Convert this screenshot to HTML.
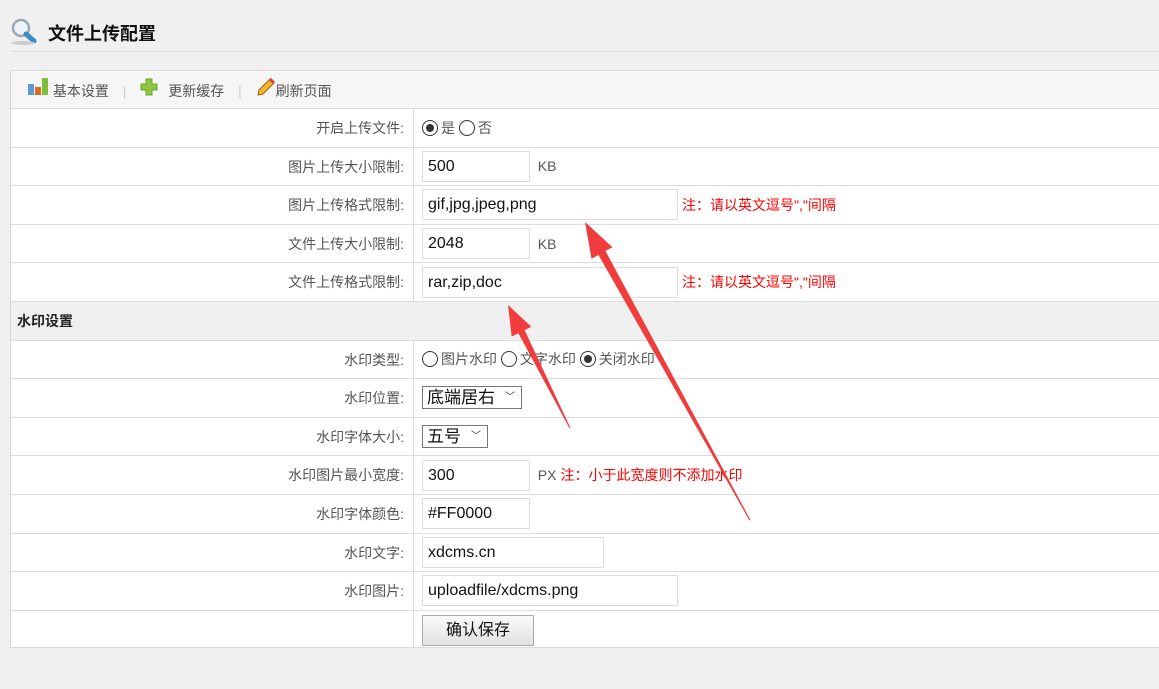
<!DOCTYPE html>
<html><head><meta charset="utf-8"><style>
*{margin:0;padding:0;box-sizing:border-box}
body{width:1159px;height:689px;background:#f0f0f0;font-family:"Liberation Sans","Noto Sans CJK SC",sans-serif;position:relative;overflow:hidden;color:#333}
.title{position:absolute;left:48px;top:20px;font-size:18px;font-weight:bold;color:#111}
.hline{position:absolute;left:10px;right:0;top:51px;border-top:1px solid #ddd}
.box{position:absolute;left:10px;top:70px;width:1160px;height:578px;background:#fff;border:1px solid #d8d8d8}
.tb{height:38px;background:#f6f6f6;border-bottom:1px solid #ddd;font-size:14px;color:#555;line-height:38px;padding-left:16px}
.tb span{display:inline-block;vertical-align:middle}
.row{height:38.6px;border-bottom:1px solid #ddd;display:flex;font-size:14px}
.lab{width:403px;border-right:1px solid #ddd;text-align:right;padding-right:9px;line-height:38px;color:#555}
.val{padding-left:8px;display:flex;align-items:center;color:#555}
.inp{height:31px;border:1px solid #ddd;font-size:16px;color:#111;padding-left:5px;line-height:29px;background:#fff}
.red{color:#f00;font-size:14px;margin-left:4px}
.sec{height:38.6px;border-bottom:1px solid #ddd;background:#f0f0f0;font-weight:bold;font-size:14px;line-height:38px;padding-left:6px;color:#222}
.rad{display:inline-block;width:16px;height:16px;border:1px solid #333;border-radius:50%;vertical-align:-3px;margin-right:3px;position:relative;background:#fff}
.rad.on::after{content:"";position:absolute;left:3px;top:3px;width:8px;height:8px;border-radius:50%;background:#333}
.sel{height:23px;border:1px solid #777;font-size:17px;color:#111;padding:0 4px;line-height:21px;display:flex;align-items:center}
.sel i{font-style:normal;font-size:10px;margin-left:10px;color:#333}
.btn{height:31px;width:112px;border:1px solid #aaa;background:linear-gradient(#fafafa,#e2e2e2);font-size:16px;color:#111;text-align:center;line-height:29px}
</style></head><body>
<svg style="position:absolute;left:10px;top:18px" width="30" height="28" viewBox="0 0 30 28"><circle cx="11" cy="10" r="8" fill="#eef3f8" stroke="#9aa6b2" stroke-width="2.5"/><path d="M16 16 L24 23" stroke="#3a8cc4" stroke-width="5" stroke-linecap="round"/><ellipse cx="13" cy="25" rx="12" ry="2" fill="#ccc"/></svg>
<div class="title">文件上传配置</div>
<div class="hline"></div>
<div class="box">
<div class="tb"><span><svg width="22" height="20" viewBox="0 0 22 20"><rect x="1" y="8" width="6" height="11" fill="#5b9bd5"/><rect x="8" y="11" width="6" height="8" fill="#e06a1b"/><rect x="15" y="2" width="6" height="17" fill="#7cbf3a"/></svg></span> <span>基本设置</span> <span style="color:#ccc;margin:0 10px">|</span> <span><svg width="18" height="18" viewBox="0 0 18 18"><path d="M6 1h6v5h5v6h-5v5H6v-5H1V6h5z" fill="#8cc63f" stroke="#6aa52a"/></svg></span> <span style="margin-left:6px">更新缓存</span> <span style="color:#ccc;margin:0 10px">|</span> <span><svg width="20" height="20" viewBox="0 0 20 20"><path d="M3 14 L14 3 L18 7 L7 18 L2 19 Z" fill="#f5b828" stroke="#a0601a"/><path d="M14 3 L18 7" stroke="#e04040" stroke-width="3"/></svg></span><span>刷新页面</span></div>
<div class="row"><div class="lab">开启上传文件:</div><div class="val"><span class="rad on"></span>是&nbsp;<span class="rad"></span>否</div></div>
<div class="row"><div class="lab">图片上传大小限制:</div><div class="val"><div class="inp" style="width:108px">500</div>&nbsp;&nbsp;KB</div></div>
<div class="row"><div class="lab">图片上传格式限制:</div><div class="val"><div class="inp" style="width:256px">gif,jpg,jpeg,png</div><span class="red">注：请以英文逗号","间隔</span></div></div>
<div class="row"><div class="lab">文件上传大小限制:</div><div class="val"><div class="inp" style="width:108px">2048</div>&nbsp;&nbsp;KB</div></div>
<div class="row"><div class="lab">文件上传格式限制:</div><div class="val"><div class="inp" style="width:256px">rar,zip,doc</div><span class="red">注：请以英文逗号","间隔</span></div></div>
<div class="sec">水印设置</div>
<div class="row"><div class="lab">水印类型:</div><div class="val"><span class="rad"></span>图片水印&nbsp;<span class="rad"></span>文字水印&nbsp;<span class="rad on"></span>关闭水印</div></div>
<div class="row"><div class="lab">水印位置:</div><div class="val"><div class="sel" style="width:100px">底端居右<i>﹀</i></div></div></div>
<div class="row"><div class="lab">水印字体大小:</div><div class="val"><div class="sel" style="width:66px">五号<i>﹀</i></div></div></div>
<div class="row"><div class="lab">水印图片最小宽度:</div><div class="val"><div class="inp" style="width:108px">300</div>&nbsp;&nbsp;PX<span class="red">注：小于此宽度则不添加水印</span></div></div>
<div class="row"><div class="lab">水印字体颜色:</div><div class="val"><div class="inp" style="width:108px">#FF0000</div></div></div>
<div class="row"><div class="lab">水印文字:</div><div class="val"><div class="inp" style="width:182px">xdcms.cn</div></div></div>
<div class="row"><div class="lab">水印图片:</div><div class="val"><div class="inp" style="width:256px">uploadfile/xdcms.png</div></div></div>
<div class="row" style="border-bottom:none"><div class="lab"></div><div class="val"><div class="btn">确认保存</div></div></div>
</div>
<svg style="position:absolute;left:0;top:0" width="1159" height="689">
<polygon points="585,222 612.5,247.2 605.5,251 750.5,520 749.5,520.5 598.5,255 591.5,258.8" fill="#f03c3c"/>
<polygon points="508,305 531.3,326.7 524.6,330.1 570.5,428 569.5,428.3 518.4,333.3 511.7,336.6" fill="#f03c3c"/>
</svg>
</body></html>
